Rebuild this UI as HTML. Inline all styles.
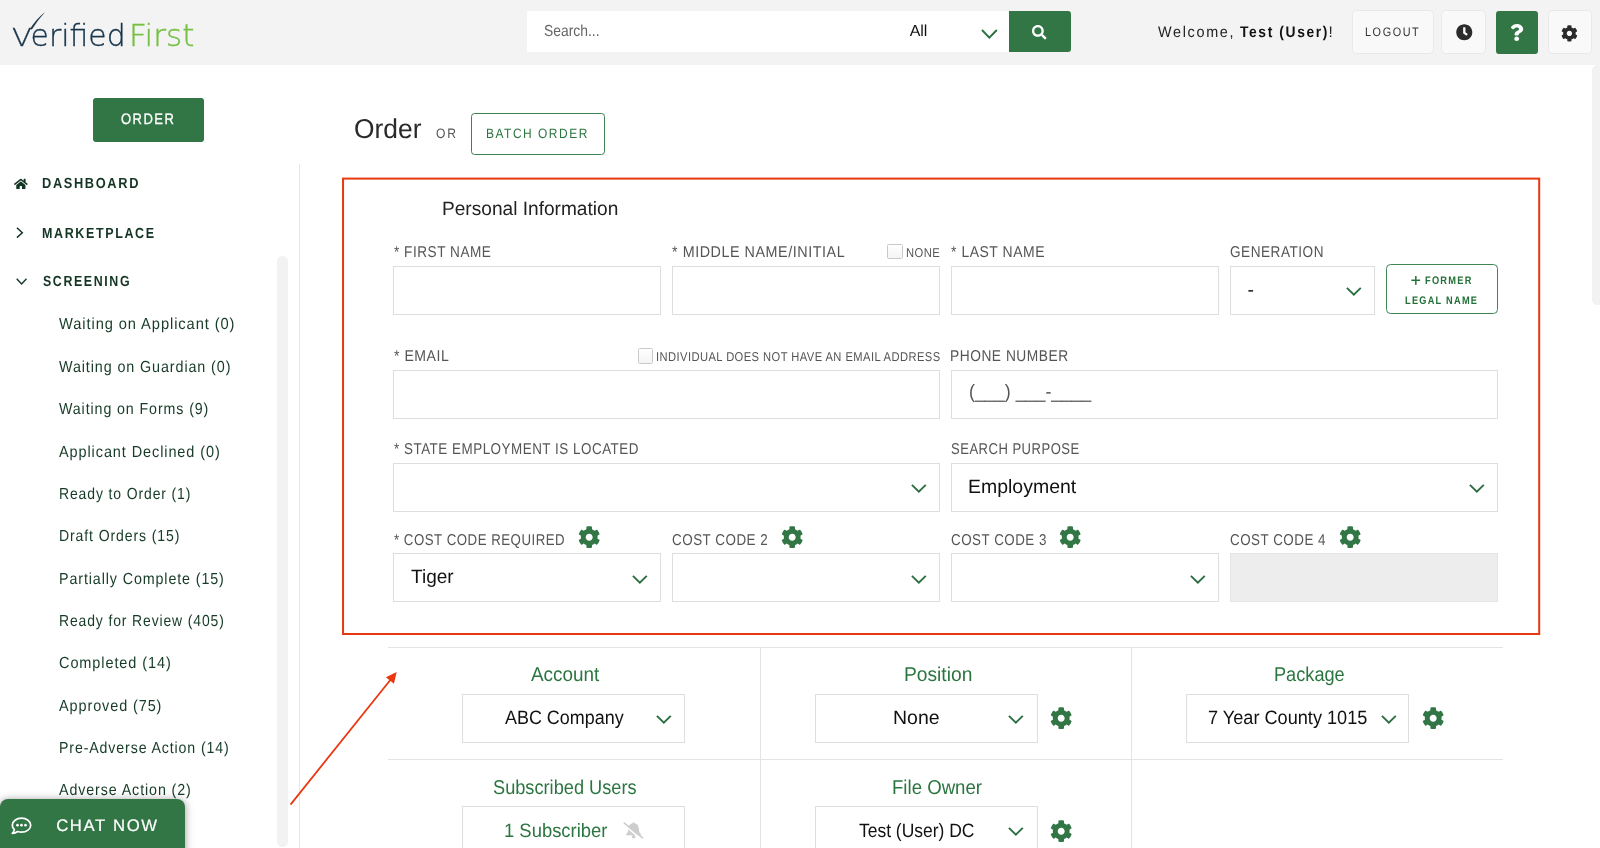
<!DOCTYPE html>
<html lang="en">
<head>
<meta charset="utf-8">
<title>Verified First - Order</title>
<style>
html,body{margin:0;padding:0;}
body{width:1600px;height:848px;overflow:hidden;background:#fff;position:relative;font-family:"Liberation Sans",sans-serif;color:#333;}
.a,.t,.box,.hbtn{position:absolute;box-sizing:border-box;}
.t{white-space:nowrap;line-height:1;text-rendering:geometricPrecision;}
.box{background:#fff;border:1px solid #dedede;}
.hbtn{top:10px;height:44px;background:#f9f9f9;border:1px solid #e9e9e9;border-radius:4.5px;}
svg{position:absolute;overflow:visible;}
#w{position:absolute;left:0;top:0;width:1600px;height:848px;overflow:hidden;will-change:transform;}
</style>
</head>
<body>
<div id="w">
<svg width="0" height="0" style="left:0;top:0"><defs>
<path id="cog" d="M487.4 315.7l-42.6-24.6c4.3-23.2 4.3-47 0-70.2l42.6-24.6c4.9-2.8 7.1-8.6 5.5-14-11.1-35.6-30-67.8-54.7-94.6-3.8-4.1-10-5.1-14.8-2.3L380.8 110c-17.9-15.4-38.5-27.3-60.8-35.1V25.8c0-5.6-3.9-10.5-9.4-11.7-36.7-8.2-74.3-7.8-109.2 0-5.5 1.2-9.4 6.1-9.4 11.7V75c-22.2 7.9-42.8 19.8-60.8 35.1L88.7 85.5c-4.9-2.8-11-1.9-14.8 2.3-24.7 26.7-43.6 58.9-54.7 94.6-1.7 5.4.6 11.2 5.5 14L67.3 221c-4.3 23.2-4.3 47 0 70.2l-42.6 24.6c-4.9 2.8-7.1 8.6-5.5 14 11.1 35.6 30 67.8 54.7 94.6 3.8 4.1 10 5.1 14.8 2.3l42.6-24.6c17.9 15.4 38.5 27.3 60.8 35.1v49.2c0 5.6 3.9 10.5 9.4 11.7 36.7 8.2 74.3 7.8 109.2 0 5.5-1.2 9.4-6.1 9.4-11.7v-49.2c22.2-7.9 42.8-19.8 60.8-35.1l42.6 24.6c4.9 2.8 11 1.9 14.8-2.3 24.7-26.7 43.6-58.9 54.7-94.6 1.5-5.5-.7-11.3-5.6-14.1zM256 336c-44.1 0-80-35.9-80-80s35.9-80 80-80 80 35.9 80 80-35.9 80-80 80z"/>
<path id="chev" d="M0.9 0.9 L7.85 7.7 L14.8 0.9" fill="none" stroke="#2b6e40" stroke-width="1.9"/>
</defs></svg>
<!-- header -->
<div class="a" style="left:0px;top:0px;width:1600px;height:65px;background:#f3f3f3;"></div>
<svg style="left:0;top:0" width="260" height="65" viewBox="0 0 260 65">
<path d="M30.2 28.9 Q35.6 19.8 44.3 12.7 Q37.3 20.5 31.9 29.3 Z" fill="#16344a" stroke="#16344a" stroke-width="0.25"/>
<text y="45.6" font-family="DejaVu Sans, Liberation Sans, sans-serif" font-weight="200" font-size="30" fill="#16344a" stroke="#16344a" stroke-width="0.35"><tspan x="12" font-size="24" textLength="19.71" lengthAdjust="spacingAndGlyphs">V</tspan><tspan x="30.6" textLength="95.05" lengthAdjust="spacingAndGlyphs">erified</tspan> <tspan x="129" fill="#77c043" stroke="#77c043" textLength="65.35" lengthAdjust="spacingAndGlyphs">First</tspan></text>
</svg>
<div class="a" style="left:527px;top:11px;width:483px;height:40.5px;background:#fff;"></div>
<div class="t" style="left:544.37px;top:24px;font-size:15.99px;color:#666;transform:scaleX(0.8673);transform-origin:0 0;">Search...</div>
<div class="t" style="left:909.77px;top:24px;font-size:15.99px;color:#111;letter-spacing:-0.082px;">All</div>
<svg style="left:981px;top:28.6px" width="17" height="10" viewBox="0 0 17 10"><path d="M1 1 L8.3 8.6 L15.8 1" fill="none" stroke="#2b6e40" stroke-width="1.9"/></svg>
<div class="a" style="left:1009px;top:11px;width:61.5px;height:40.5px;background:#327646;border-radius:0 3px 3px 0;"></div>
<svg style="left:1031.5px;top:24.5px" width="14.5" height="14.5" viewBox="0 0 512 512"><path fill="#fff" d="M505 442.7L405.3 343c-4.5-4.5-10.6-7-17-7H372c27.6-35.3 44-79.7 44-128C416 93.1 322.9 0 208 0S0 93.1 0 208s93.1 208 208 208c48.3 0 92.7-16.4 128-44v16.3c0 6.4 2.5 12.5 7 17l99.7 99.7c9.4 9.4 24.6 9.4 33.9 0l28.3-28.3c9.4-9.4 9.4-24.6.1-34zM208 336c-70.7 0-128-57.2-128-128 0-70.7 57.2-128 128-128 70.7 0 128 57.2 128 128 0 70.7-57.2 128-128 128z"/></svg>
<div class="t" style="left:1158.04px;top:25px;font-size:15.41px;color:#222;letter-spacing:1.8px;transform:scaleX(0.9349);transform-origin:0 0;">Welcome,</div>
<div class="t" style="left:1239.84px;top:25px;font-size:15.41px;color:#111;letter-spacing:1.8px;font-weight:bold;transform:scaleX(0.8983);transform-origin:0 0;">Test (User)</div>
<div class="t" style="left:1328.51px;top:25px;font-size:15.41px;color:#222;">!</div>
<div class="hbtn" style="left:1352px;width:82px;"></div>
<div class="t" style="left:1365.11px;top:26px;font-size:12.35px;color:#333;letter-spacing:1.8px;transform:scaleX(0.8792);transform-origin:0 0;">LOGOUT</div>
<div class="hbtn" style="left:1441px;width:45px;"></div>
<svg style="left:1456.1px;top:23.8px" width="16.6" height="16.6" viewBox="0 0 512 512"><path fill="#2b2b2b" d="M256 8C119 8 8 119 8 256s111 248 248 248 248-111 248-248S393 8 256 8zm57.1 350.1L224.9 294c-3.1-2.3-4.9-5.9-4.9-9.7V116c0-6.6 5.4-12 12-12h48c6.6 0 12 5.4 12 12v137.7l63.5 46.2c5.4 3.9 6.5 11.4 2.6 16.8l-28.2 38.8c-3.9 5.3-11.4 6.5-16.8 2.6z"/></svg>
<div class="a" style="left:1495.5px;top:11px;width:42.5px;height:42.5px;background:#327646;border-radius:3px;"></div>
<svg style="left:1510.3px;top:23.8px" width="13.4" height="17" viewBox="0 0 384 512" preserveAspectRatio="none"><path fill="#fff" d="M202.021 0C122.202 0 70.503 32.703 29.914 91.026c-7.363 10.58-5.093 25.086 5.178 32.874l43.138 32.709c10.373 7.865 25.132 6.026 33.253-4.148 25.049-31.381 43.63-49.449 82.757-49.449 30.764 0 68.816 19.799 68.816 49.631 0 22.552-18.617 34.134-48.993 51.164-35.423 19.86-82.299 44.576-82.299 106.405V320c0 13.255 10.745 24 24 24h72.471c13.255 0 24-10.745 24-24v-5.773c0-42.86 125.268-44.645 125.268-160.627C377.504 66.256 286.902 0 202.021 0zM192 373.459c-38.196 0-69.271 31.075-69.271 69.271 0 38.195 31.075 69.27 69.271 69.27s69.271-31.075 69.271-69.271-31.075-69.27-69.271-69.27z"/></svg>
<div class="hbtn" style="left:1548px;width:44px;"></div>
<svg style="left:1560.8px;top:24.8px" width="16.8" height="16.8" viewBox="0 0 512 512"><use href="#cog" fill="#2b2b2b"/></svg>
<div class="a" style="left:1592.3px;top:65px;width:11.2px;height:239.5px;background:#f2f2f2;border-radius:5.6px;"></div>
<!-- sidebar -->
<div class="a" style="left:93px;top:98px;width:111px;height:43.5px;background:#327646;border-radius:3px;"></div>
<div class="t" style="left:120.98px;top:112px;font-size:15.12px;color:#fff;letter-spacing:1.7px;transform:scaleX(0.8622);transform-origin:0 0;-webkit-text-stroke:0.3px #fff;">ORDER</div>
<div class="a" style="left:299px;top:164px;width:1px;height:684px;background:#e6e6e6;"></div>
<div class="a" style="left:277px;top:256px;width:11px;height:591px;background:#f2f2f2;border-radius:5.5px;"></div>
<svg style="left:14px;top:178px" width="13.7" height="11.8" viewBox="0 0 576 512" preserveAspectRatio="none"><path fill="#143524" d="M280.37 148.26L96 300.11V464a16 16 0 0 0 16 16l112.06-.290a16 16 0 0 0 15.92-16V368a16 16 0 0 1 16-16h64a16 16 0 0 1 16 16v95.64a16 16 0 0 0 16 16.05L464 480a16 16 0 0 0 16-16V300L295.67 148.26a12.19 12.19 0 0 0-15.3 0zM571.6 251.47L488 182.56V44.05a12 12 0 0 0-12-12h-56a12 12 0 0 0-12 12v72.61L318.47 43a48 48 0 0 0-61 0L4.34 251.47a12 12 0 0 0-1.6 16.9l25.5 31A12 12 0 0 0 45.15 301l235.22-193.74a12.19 12.19 0 0 1 15.3 0L530.9 301a12 12 0 0 0 16.9-1.6l25.5-31a12 12 0 0 0-1.7-16.93z"/></svg>
<div class="t" style="left:42.44px;top:177px;font-size:14.68px;color:#143524;letter-spacing:1.9px;font-weight:bold;transform:scaleX(0.8717);transform-origin:0 0;">DASHBOARD</div>
<svg style="left:16px;top:227.3px" width="8" height="12" viewBox="0 0 8 12"><path d="M0.9 0.8 L6.3 5.7 L0.9 10.6" fill="none" stroke="#143524" stroke-width="1.45"/></svg>
<div class="t" style="left:42.46px;top:227px;font-size:14.68px;color:#143524;letter-spacing:1.9px;font-weight:bold;transform:scaleX(0.852);transform-origin:0 0;">MARKETPLACE</div>
<svg style="left:15.7px;top:278px" width="12" height="8" viewBox="0 0 12 8"><path d="M0.7 0.8 L5.6 5.9 L10.5 0.8" fill="none" stroke="#143524" stroke-width="1.4"/></svg>
<div class="t" style="left:42.94px;top:275px;font-size:14.68px;color:#143524;letter-spacing:1.9px;font-weight:bold;transform:scaleX(0.8447);transform-origin:0 0;">SCREENING</div>
<div class="t" style="left:59.44px;top:317px;font-size:15.99px;color:#173b27;letter-spacing:1px;transform:scaleX(0.9177);transform-origin:0 0;">Waiting on Applicant (0)</div>
<div class="t" style="left:59.44px;top:360px;font-size:15.99px;color:#173b27;letter-spacing:1px;transform:scaleX(0.8971);transform-origin:0 0;">Waiting on Guardian (0)</div>
<div class="t" style="left:59.44px;top:402px;font-size:15.99px;color:#173b27;letter-spacing:1px;transform:scaleX(0.8909);transform-origin:0 0;">Waiting on Forms (9)</div>
<div class="t" style="left:59.47px;top:445px;font-size:15.99px;color:#173b27;letter-spacing:1px;transform:scaleX(0.9061);transform-origin:0 0;">Applicant Declined (0)</div>
<div class="t" style="left:59.25px;top:487px;font-size:15.99px;color:#173b27;letter-spacing:1px;transform:scaleX(0.8745);transform-origin:0 0;">Ready to Order (1)</div>
<div class="t" style="left:59.25px;top:529px;font-size:15.99px;color:#173b27;letter-spacing:1px;transform:scaleX(0.8803);transform-origin:0 0;">Draft Orders (15)</div>
<div class="t" style="left:59.23px;top:572px;font-size:15.99px;color:#173b27;letter-spacing:1px;transform:scaleX(0.8932);transform-origin:0 0;">Partially Complete (15)</div>
<div class="t" style="left:59.26px;top:614px;font-size:15.99px;color:#173b27;letter-spacing:1px;transform:scaleX(0.8724);transform-origin:0 0;">Ready for Review (405)</div>
<div class="t" style="left:58.76px;top:656px;font-size:15.99px;color:#173b27;letter-spacing:1px;transform:scaleX(0.9072);transform-origin:0 0;">Completed (14)</div>
<div class="t" style="left:59.47px;top:699px;font-size:15.99px;color:#173b27;letter-spacing:1px;transform:scaleX(0.904);transform-origin:0 0;">Approved (75)</div>
<div class="t" style="left:59.24px;top:741px;font-size:15.99px;color:#173b27;letter-spacing:1px;transform:scaleX(0.8855);transform-origin:0 0;">Pre-Adverse Action (14)</div>
<div class="t" style="left:59.47px;top:783px;font-size:15.99px;color:#173b27;letter-spacing:1px;transform:scaleX(0.893);transform-origin:0 0;">Adverse Action (2)</div>
<!-- main -->
<div class="t" style="left:353.75px;top:115px;font-size:27.18px;color:#2a2a2a;transform:scaleX(0.9708);transform-origin:0 0;">Order</div>
<div class="t" style="left:436.43px;top:127px;font-size:13.66px;color:#555;letter-spacing:2px;transform:scaleX(0.8843);transform-origin:0 0;">OR</div>
<div class="a" style="left:470.5px;top:113px;width:134px;height:41.5px;border:1px solid #3c8252;border-radius:3.5px;background:#fff;"></div>
<div class="t" style="left:486.02px;top:127px;font-size:13.52px;color:#2b7540;letter-spacing:1.7px;transform:scaleX(0.8856);transform-origin:0 0;">BATCH ORDER</div>
<svg style="left:0;top:0" width="1600" height="848" viewBox="0 0 1600 848"><rect x="343.05" y="178.6" width="1196.15" height="455.4" fill="none" stroke="#e9380f" stroke-width="2"/></svg>
<div class="t" style="left:442.43px;top:200px;font-size:19.33px;color:#222;transform:scaleX(0.9886);transform-origin:0 0;">Personal Information</div>
<div class="t" style="left:393.68px;top:245px;font-size:15.7px;color:#555;letter-spacing:0.6px;transform:scaleX(0.8669);transform-origin:0 0;">* FIRST NAME</div>
<div class="box" style="left:393.25px;top:266.25px;width:267.5px;height:48.5px;"></div>
<div class="t" style="left:672.37px;top:245px;font-size:15.7px;color:#555;letter-spacing:0.6px;transform:scaleX(0.9135);transform-origin:0 0;">* MIDDLE NAME/INITIAL</div>
<div class="box" style="left:887px;top:244px;width:16px;height:15px;border-color:#c9c9c9;border-radius:1.5px;background:linear-gradient(#fff,#f4f4f4);"></div>
<div class="t" style="left:905.98px;top:247px;font-size:12.79px;color:#555;letter-spacing:0.5px;transform:scaleX(0.8768);transform-origin:0 0;">NONE</div>
<div class="box" style="left:672.25px;top:266.25px;width:267.5px;height:48.5px;"></div>
<div class="t" style="left:951.37px;top:245px;font-size:15.7px;color:#555;letter-spacing:0.6px;transform:scaleX(0.8898);transform-origin:0 0;">* LAST NAME</div>
<div class="box" style="left:951.25px;top:266.25px;width:267.5px;height:48.5px;"></div>
<div class="t" style="left:1229.62px;top:245px;font-size:15.7px;color:#555;letter-spacing:0.6px;transform:scaleX(0.866);transform-origin:0 0;">GENERATION</div>
<div class="box" style="left:1230.1px;top:266.25px;width:144.65px;height:48.5px;"></div>
<div class="t" style="left:1247.44px;top:281px;font-size:19.33px;color:#111;">-</div>
<svg style="left:1346.2px;top:287.1px" width="15.7" height="8.7" viewBox="0 0 15.7 8.7"><use href="#chev"/></svg>
<div class="a" style="left:1386px;top:264px;width:112px;height:50px;border:1px solid #3f8555;border-radius:4.5px;background:#fff;"></div>
<div class="t" style="left:1410.76px;top:272px;font-size:17.2px;color:#237038;-webkit-text-stroke:0.3px #237038;">+</div>
<div class="t" style="left:1425.18px;top:276px;font-size:11.05px;color:#237038;letter-spacing:1.5px;font-weight:bold;transform:scaleX(0.8381);transform-origin:0 0;">FORMER</div>
<div class="t" style="left:1405.38px;top:296px;font-size:11.05px;color:#237038;letter-spacing:1.5px;font-weight:bold;transform:scaleX(0.8336);transform-origin:0 0;">LEGAL NAME</div>
<div class="t" style="left:393.67px;top:349px;font-size:15.7px;color:#555;letter-spacing:0.6px;transform:scaleX(0.8961);transform-origin:0 0;">* EMAIL</div>
<div class="box" style="left:637.5px;top:348.4px;width:15.9px;height:15.2px;border-color:#c9c9c9;border-radius:1.5px;background:linear-gradient(#fff,#f4f4f4);"></div>
<div class="t" style="left:655.57px;top:351px;font-size:12.79px;color:#555;letter-spacing:0.5px;transform:scaleX(0.8732);transform-origin:0 0;">INDIVIDUAL DOES NOT HAVE AN EMAIL ADDRESS</div>
<div class="box" style="left:393.25px;top:370px;width:546.5px;height:48.75px;"></div>
<div class="t" style="left:950.47px;top:349px;font-size:15.7px;color:#555;letter-spacing:0.6px;transform:scaleX(0.877);transform-origin:0 0;">PHONE NUMBER</div>
<div class="box" style="left:951.25px;top:370px;width:546.5px;height:48.75px;"></div>
<div class="t" style="left:968.89px;top:383px;font-size:19.33px;color:#555;transform:scaleX(0.9237);transform-origin:0 0;">(___) ___-____</div>
<div class="t" style="left:393.68px;top:442px;font-size:15.7px;color:#555;letter-spacing:0.6px;transform:scaleX(0.8552);transform-origin:0 0;">* STATE EMPLOYMENT IS LOCATED</div>
<div class="box" style="left:393.25px;top:463px;width:546.5px;height:48.75px;"></div>
<svg style="left:911.2px;top:483.9px" width="15.7" height="8.7" viewBox="0 0 15.7 8.7"><use href="#chev"/></svg>
<div class="t" style="left:951.11px;top:442px;font-size:15.7px;color:#555;letter-spacing:0.6px;transform:scaleX(0.8308);transform-origin:0 0;">SEARCH PURPOSE</div>
<div class="box" style="left:951.25px;top:463px;width:546.5px;height:48.75px;"></div>
<div class="t" style="left:968.4px;top:478px;font-size:19.33px;color:#111;transform:scaleX(1.0076);transform-origin:0 0;">Employment</div>
<svg style="left:1468.7px;top:483.9px" width="15.7" height="8.7" viewBox="0 0 15.7 8.7"><use href="#chev"/></svg>
<div class="t" style="left:393.69px;top:533px;font-size:15.7px;color:#555;letter-spacing:0.6px;transform:scaleX(0.845);transform-origin:0 0;">* COST CODE REQUIRED</div>
<svg style="left:577.7px;top:526.05px" width="22.4" height="22.4" viewBox="0 0 512 512"><use href="#cog" fill="#327646"/></svg>
<div class="box" style="left:393.25px;top:553.25px;width:267.5px;height:48.5px;"></div>
<div class="t" style="left:410.87px;top:568px;font-size:19.33px;color:#111;transform:scaleX(0.9842);transform-origin:0 0;">Tiger</div>
<svg style="left:632px;top:574.5px" width="15.7" height="8.7" viewBox="0 0 15.7 8.7"><use href="#chev"/></svg>
<div class="t" style="left:671.92px;top:533px;font-size:15.7px;color:#555;letter-spacing:0.6px;transform:scaleX(0.8545);transform-origin:0 0;">COST CODE 2</div>
<svg style="left:780.7px;top:526.05px" width="22.4" height="22.4" viewBox="0 0 512 512"><use href="#cog" fill="#327646"/></svg>
<div class="box" style="left:672.25px;top:553.25px;width:267.5px;height:48.5px;"></div>
<svg style="left:911.2px;top:574.5px" width="15.7" height="8.7" viewBox="0 0 15.7 8.7"><use href="#chev"/></svg>
<div class="t" style="left:950.92px;top:533px;font-size:15.7px;color:#555;letter-spacing:0.6px;transform:scaleX(0.8515);transform-origin:0 0;">COST CODE 3</div>
<svg style="left:1059.4px;top:526.05px" width="22.4" height="22.4" viewBox="0 0 512 512"><use href="#cog" fill="#327646"/></svg>
<div class="box" style="left:951.25px;top:553.25px;width:267.5px;height:48.5px;"></div>
<svg style="left:1190.1px;top:574.5px" width="15.7" height="8.7" viewBox="0 0 15.7 8.7"><use href="#chev"/></svg>
<div class="t" style="left:1229.82px;top:533px;font-size:15.7px;color:#555;letter-spacing:0.6px;transform:scaleX(0.8528);transform-origin:0 0;">COST CODE 4</div>
<svg style="left:1338.5px;top:526.05px" width="22.4" height="22.4" viewBox="0 0 512 512"><use href="#cog" fill="#327646"/></svg>
<div class="box" style="left:1230.25px;top:553.25px;width:267.5px;height:48.5px;background:#ededed;border-color:#e4e4e4;"></div>
<!-- bottom -->
<div class="a" style="left:387.5px;top:647px;width:1115.7px;height:1px;background:#e4e4e4;"></div>
<div class="a" style="left:387.5px;top:759px;width:1115.7px;height:1px;background:#e4e4e4;"></div>
<div class="a" style="left:760px;top:647px;width:1px;height:201px;background:#e4e4e4;"></div>
<div class="a" style="left:1131px;top:647px;width:1px;height:201px;background:#e4e4e4;"></div>
<div class="t" style="left:531.26px;top:665px;font-size:19.99px;color:#2b7540;transform:scaleX(0.9468);transform-origin:0 0;">Account</div>
<div class="box" style="left:462px;top:694px;width:222.9px;height:48.8px;"></div>
<div class="t" style="left:505.06px;top:709px;font-size:19.33px;color:#111;transform:scaleX(0.9282);transform-origin:0 0;">ABC Company</div>
<svg style="left:656.3px;top:715.2px" width="15.7" height="8.7" viewBox="0 0 15.7 8.7"><use href="#chev"/></svg>
<div class="t" style="left:903.62px;top:665px;font-size:19.99px;color:#2b7540;transform:scaleX(0.9608);transform-origin:0 0;">Position</div>
<div class="box" style="left:814.8px;top:694px;width:222.8px;height:48.8px;"></div>
<div class="t" style="left:893px;top:709px;font-size:19.33px;color:#111;transform:scaleX(1.0074);transform-origin:0 0;">None</div>
<svg style="left:1008.2px;top:715.2px" width="15.7" height="8.7" viewBox="0 0 15.7 8.7"><use href="#chev"/></svg>
<svg style="left:1049.7px;top:707.05px" width="22.4" height="22.4" viewBox="0 0 512 512"><use href="#cog" fill="#327646"/></svg>
<div class="t" style="left:1274.31px;top:665px;font-size:19.99px;color:#2b7540;transform:scaleX(0.9089);transform-origin:0 0;">Package</div>
<div class="box" style="left:1186.2px;top:694px;width:222.8px;height:48.8px;"></div>
<div class="t" style="left:1208.37px;top:709px;font-size:19.33px;color:#111;transform:scaleX(0.9386);transform-origin:0 0;">7 Year County 1015</div>
<svg style="left:1380.7px;top:715.2px" width="15.7" height="8.7" viewBox="0 0 15.7 8.7"><use href="#chev"/></svg>
<svg style="left:1421.9px;top:707.05px" width="22.4" height="22.4" viewBox="0 0 512 512"><use href="#cog" fill="#327646"/></svg>
<div class="t" style="left:493.27px;top:778px;font-size:19.99px;color:#2b7540;transform:scaleX(0.9104);transform-origin:0 0;">Subscribed Users</div>
<div class="box" style="left:462px;top:806px;width:222.9px;height:49px;"></div>
<div class="t" style="left:504.4px;top:822px;font-size:19.33px;color:#2b7540;transform:scaleX(0.9529);transform-origin:0 0;">1 Subscriber</div>
<svg style="left:622.8px;top:822.2px" width="20.5" height="17" viewBox="0 0 20.5 17"><g fill="#cdcdcd"><path d="M10.6 1.3 C7.3 1.3 5.3 3.7 5.3 6.9 C5.3 9.6 4.5 11 3.1 12.2 L3.1 13.3 L18.1 13.3 L18.1 12.2 C16.7 11 15.9 9.6 15.9 6.9 C15.9 3.7 13.9 1.3 10.6 1.3 Z"/><circle cx="10.6" cy="14.7" r="1.8"/><rect x="9.7" y="0.3" width="1.8" height="2" rx="0.9"/></g><path d="M0.3 2.3 L17.7 16.7" stroke="#fff" stroke-width="1.7"/><path d="M1.3 1.1 L19.5 15.9" stroke="#cdcdcd" stroke-width="1.7" stroke-linecap="round"/></svg>
<div class="t" style="left:892.27px;top:778px;font-size:19.99px;color:#2b7540;transform:scaleX(0.9318);transform-origin:0 0;">File Owner</div>
<div class="box" style="left:814.8px;top:806px;width:222.8px;height:49px;"></div>
<div class="t" style="left:858.91px;top:822px;font-size:19.33px;color:#111;transform:scaleX(0.9034);transform-origin:0 0;">Test (User) DC</div>
<svg style="left:1008.2px;top:827.4px" width="15.7" height="8.7" viewBox="0 0 15.7 8.7"><use href="#chev"/></svg>
<svg style="left:1049.7px;top:819.55px" width="22.4" height="22.4" viewBox="0 0 512 512"><use href="#cog" fill="#327646"/></svg>
<!-- overlay -->
<svg style="left:0;top:0" width="1600" height="848" viewBox="0 0 1600 848"><path d="M290.5 804.6 L390.5 679.7" stroke="#e9380f" stroke-width="1.8" fill="none"/><path d="M396.7 671.9 L393.9 683.65 L385.9 677.25 Z" fill="#e9380f"/></svg>
<div class="a" style="left:0;top:799.4px;width:185px;height:60px;background:#327646;border-radius:8px;box-shadow:0 1px 9px rgba(0,0,0,0.42);"></div>
<svg style="left:10.5px;top:817px" width="21" height="18" viewBox="0 0 21 18"><path d="M10.5 1.2 C5.4 1.2 1.3 4.3 1.3 8.2 C1.3 9.9 2.1 11.4 3.4 12.6 C3.1 14 2.3 15.3 1.3 16.3 C3.3 16.3 5.2 15.6 6.6 14.5 C7.8 14.9 9.1 15.2 10.5 15.2 C15.6 15.2 19.7 12.1 19.7 8.2 C19.7 4.3 15.6 1.2 10.5 1.2 Z" fill="none" stroke="#fff" stroke-width="1.7" stroke-linejoin="round"/><circle cx="6.5" cy="8.2" r="1.35" fill="#fff"/><circle cx="10.5" cy="8.2" r="1.35" fill="#fff"/><circle cx="14.5" cy="8.2" r="1.35" fill="#fff"/></svg>
<div class="t" style="left:56.15px;top:818px;font-size:16.72px;color:#fff;letter-spacing:1.645px;-webkit-text-stroke:0.2px #fff;">CHAT NOW</div>
</div>
</body>
</html>
